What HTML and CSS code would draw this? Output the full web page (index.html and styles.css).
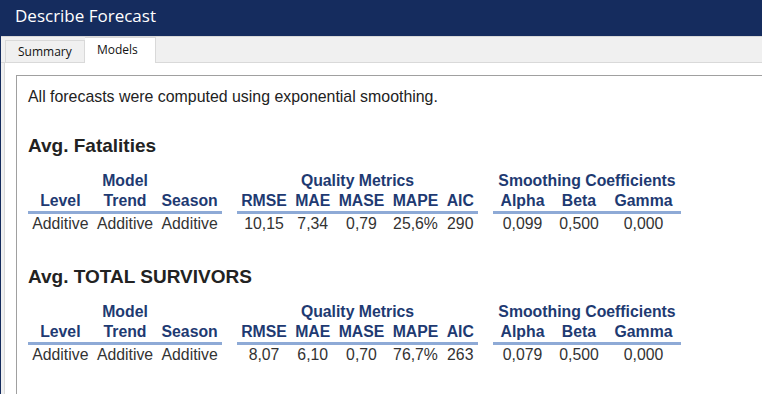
FILE: index.html
```html
<!DOCTYPE html>
<html lang="en">
<head>
  <meta charset="UTF-8" />
  <title>Describe Forecast</title>
  <link rel="stylesheet" href="styles.css">
</head>
<body>

  <div class="window">
    <div class="titlebar">Describe Forecast</div>

    <div class="tabs">
      <div class="tab">Summary</div>
      <div class="tab active">Models</div>
    </div>

    <div class="panel">
      <div class="content">
        <p class="note">All forecasts were computed using exponential smoothing.</p>

        <h3>Avg. Fatalities</h3>
        <div class="groups">
          <table class="model">
            <tr class="group"><th colspan="3">Model</th></tr>
            <tr class="cols"><th>Level</th><th>Trend</th><th>Season</th></tr>
            <tr><td>Additive</td><td>Additive</td><td>Additive</td></tr>
          </table>
          <table class="quality">
            <tr class="group"><th colspan="5">Quality Metrics</th></tr>
            <tr class="cols"><th>RMSE</th><th>MAE</th><th>MASE</th><th>MAPE</th><th>AIC</th></tr>
            <tr><td>10,15</td><td>7,34</td><td>0,79</td><td>25,6%</td><td>290</td></tr>
          </table>
          <table class="coef">
            <tr class="group"><th colspan="3">Smoothing Coefficients</th></tr>
            <tr class="cols"><th>Alpha</th><th>Beta</th><th>Gamma</th></tr>
            <tr><td>0,099</td><td>0,500</td><td>0,000</td></tr>
          </table>
        </div>

        <h3>Avg. TOTAL SURVIVORS</h3>
        <div class="groups">
          <table class="model">
            <tr class="group"><th colspan="3">Model</th></tr>
            <tr class="cols"><th>Level</th><th>Trend</th><th>Season</th></tr>
            <tr><td>Additive</td><td>Additive</td><td>Additive</td></tr>
          </table>
          <table class="quality">
            <tr class="group"><th colspan="5">Quality Metrics</th></tr>
            <tr class="cols"><th>RMSE</th><th>MAE</th><th>MASE</th><th>MAPE</th><th>AIC</th></tr>
            <tr><td>8,07</td><td>6,10</td><td>0,70</td><td>76,7%</td><td>263</td></tr>
          </table>
          <table class="coef">
            <tr class="group"><th colspan="3">Smoothing Coefficients</th></tr>
            <tr class="cols"><th>Alpha</th><th>Beta</th><th>Gamma</th></tr>
            <tr><td>0,079</td><td>0,500</td><td>0,000</td></tr>
          </table>
        </div>
      </div>
    </div>
  </div>

</body>
</html>
```

FILE: styles.css
```css
body {
  margin: 0;
  font-family: 'Open Sans', 'Noto Sans', sans-serif;
  background: #f0f0f0;
  overflow: hidden;
}

.window {
  width: 900px;
  height: 394px;
  border-left: 1px solid #152c5e;
  background: #f0f0f0;
  display: flex;
  flex-direction: column;
}

.titlebar {
  flex-shrink: 0;
  background: #152c5e;
  color: white;
  height: 37px;
  line-height: 31px;
  padding-left: 14px;
  font-size: 17px;
  border-bottom: 1px solid #d8d8d8;
  box-sizing: border-box;
}

.tabs {
  flex-shrink: 0;
  display: flex;
  align-items: flex-end;
  height: 25px;
  padding-left: 4px;
  border-bottom: 1px solid #d9d9d9;
}

.tab {
  font-size: 12px;
  color: #111;
  height: 21px;
  line-height: 21px;
  padding: 0 12px;
  width: 54px;
  border: 1px solid #d9d9d9;
  border-bottom: none;
  background: #f0f0f0;
}

.tab.active {
  background: white;
  height: 25px;
  line-height: 23px;
  width: 46px;
  padding: 0 12px;
  margin-bottom: -1px;
  border-left: none;
}

.panel {
  flex: 1;
  min-height: 0;
  background: white;
  margin-left: 3px;
  border-left: 1px solid #d9d9d9;
  padding: 12px 0 0 11px;
}

.content {
  height: 100%;
  border-top: 1px solid #a0a0a0;
  border-left: 1px solid #a0a0a0;
  padding: 11px 0 0 11px;
  font-family: 'Liberation Sans', Arial, sans-serif;
}

.note {
  margin: 0;
  font-size: 15.9px;
  line-height: 20px;
  color: #222;
}

h3 {
  margin: 27px 0 13px;
  font-size: 19px;
  line-height: 24px;
  color: #222;
}

h3 + .groups {
  margin-bottom: 31px;
}

.groups {
  display: flex;
  gap: 15px;
}

table {
  border-collapse: collapse;
  font-size: 15.8px;
}

table.model {
  width: 194px;
}

table.quality {
  width: 241px;
}

table.coef {
  width: 188px;
}

th, td {
  padding: 0 4px;
  height: 20px;
  line-height: 20px;
  text-align: center;
  white-space: nowrap;
}

th {
  color: #1e3a72;
  font-weight: bold;
}

tr.cols th {
  border-bottom: 3px solid #8eaad6;
}

td {
  color: #333;
}
```
